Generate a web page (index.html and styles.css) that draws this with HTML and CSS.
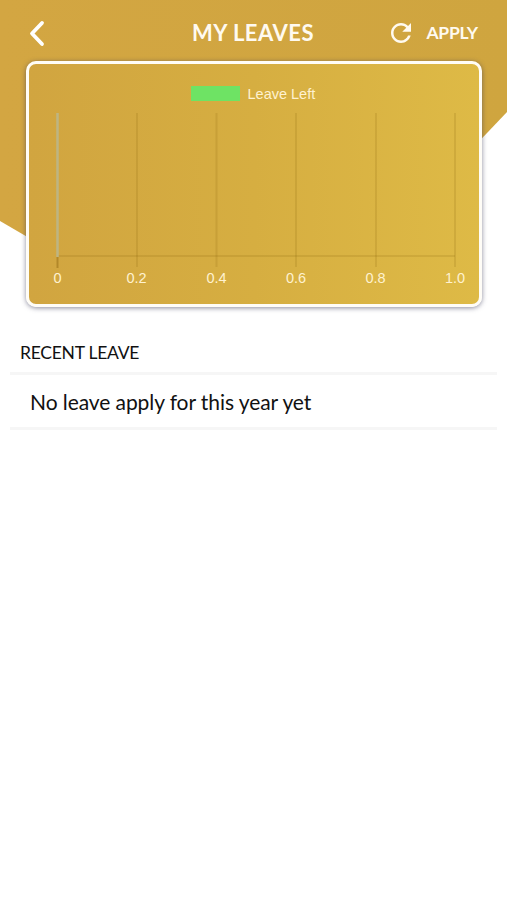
FILE: index.html
```html
<!DOCTYPE html>
<html lang="en">
<head>
    <meta charset="UTF-8">
    <meta name="viewport" content="width=device-width, initial-scale=1.0">
    <title>My Leaves</title>
    <link rel="stylesheet" href="styles.css">
</head>
<body>
    <div class="top">
        <header class="navbar">
            <button class="back" aria-label="Back">
                <svg width="18" height="28" viewBox="0 0 18 28">
                    <path d="M14 4L4 14.500l10 10.500" />
                </svg>
            </button>
            <h1>MY LEAVES</h1>
            <div class="actions">
                <button class="refresh" aria-label="Refresh">
                    <svg width="30" height="30" viewBox="0 0 24 24">
                        <path d="M17.65 6.35C16.2 4.9 14.21 4 12 4c-4.42 0-7.99 3.58-7.99 8s3.57 8 7.99 8c3.73 0 6.84-2.55 7.73-6h-2.08c-.82 2.33-3.04 4-5.65 4-3.31 0-6-2.69-6-6s2.69-6 6-6c1.66 0 3.14.69 4.22 1.78L13 11h7V4l-2.35 2.35z" />
                    </svg>
                </button>
                <button class="apply">APPLY</button>
            </div>
        </header>

        <div class="chart-card">
            <svg class="chart" width="450" height="240" viewBox="0 0 450 240">
                <rect class="legend-box" x="162" y="22" width="49" height="15" />
                <text class="legend-text" x="218.5" y="35">Leave Left</text>

                <g class="grid">
                    <path d="M108 49v154M187.500 49v154M267 49v154M347 49v154M426 49v154" />
                    <path d="M28 192h398" />
                </g>
                <path class="tick" d="M28.500 193v11" />
                <path class="axis" d="M28.500 49v144" />

                <g class="labels">
                    <text x="28.5" y="219">0</text>
                    <text x="107.500" y="219">0.2</text>
                    <text x="187.500" y="219">0.4</text>
                    <text x="267" y="219">0.6</text>
                    <text x="346.500" y="219">0.8</text>
                    <text x="426" y="219">1.0</text>
                </g>
            </svg>
        </div>
    </div>

    <section class="recent">
        <h2>RECENT LEAVE</h2>
        <p>No leave apply for this year yet</p>
    </section>
</body>
</html>
```
FILE: styles.css
```css
* {
    box-sizing: border-box;
}
body {
    margin: 0;
    font-family: Lato, sans-serif;
    background-color: #fff;
    color: #111;
}
button {
    padding: 0;
    border: none;
    background: none;
    color: #fffaf0;
    font-family: inherit;
    cursor: pointer;
}
svg {
    display: block;
}

/* gold header shape behind the card */
.top {
    position: relative;
    height: 330px;
}
.top::before {
    content: "";
    position: absolute;
    inset: 0;
    z-index: -1;
    background: linear-gradient(90deg, #d3a642, #cfa53f);
    clip-path: polygon(0 0, 100% 0, 100% 112px, 370px 256px, 60px 256px, 0 221px);
}
.navbar {
    display: grid;
    grid-template-columns: 1fr auto 1fr;
    align-items: center;
    height: 61px;
    padding: 4px 29px 0 28px;
}
.back {
    justify-self: start;
}
.back path {
    fill: none;
    stroke: #fff;
    stroke-width: 3.8;
    stroke-linecap: round;
    stroke-linejoin: round;
}
h1 {
    margin: 0;
    color: #fffaf0;
    font-size: 22px;
    font-weight: bold;
    letter-spacing: 0.5px;
}
.actions {
    display: flex;
    justify-content: flex-end;
    align-items: center;
    gap: 10px;
}
.refresh path {
    fill: #fffaf0;
}
.apply {
    font-size: 17.5px;
    font-weight: bold;
    letter-spacing: -0.2px;
}

.chart-card {
    width: 456px;
    height: 246px;
    margin: 0 auto 0 26px;
    border: 3px solid #fffdf7;
    border-radius: 10px;
    background: linear-gradient(90deg, #d1a540, #d6ae41 50%, #deba46);
    box-shadow: 0 1px 5px rgba(60, 60, 90, 0.6);
}
.chart text {
    font-family: "Liberation Sans", sans-serif;
    fill: #fff2d0;
    font-size: 14.5px;
}
.legend-box {
    fill: #6ee364;
}
.labels {
    text-anchor: middle;
}
.grid path {
    fill: none;
    stroke: rgba(120, 85, 0, 0.14);
    stroke-width: 2;
}
.tick {
    stroke: rgba(120, 80, 0, 0.35);
    stroke-width: 2;
}
.axis {
    stroke: #bdb583;
    stroke-width: 2.5;
}

.recent {
    padding: 0 10px;
}
.recent h2 {
    height: 45px;
    margin: 0;
    padding-left: 10px;
    border-bottom: 3px solid #f6f6f6;
    font-size: 17.5px;
    font-weight: normal;
    line-height: 45px;
    letter-spacing: -0.25px;
}
.recent p {
    height: 55px;
    margin: 0;
    padding-left: 20px;
    border-bottom: 3px solid #f6f6f6;
    font-size: 21px;
    line-height: 54px;
    letter-spacing: -0.08px;
}
```
